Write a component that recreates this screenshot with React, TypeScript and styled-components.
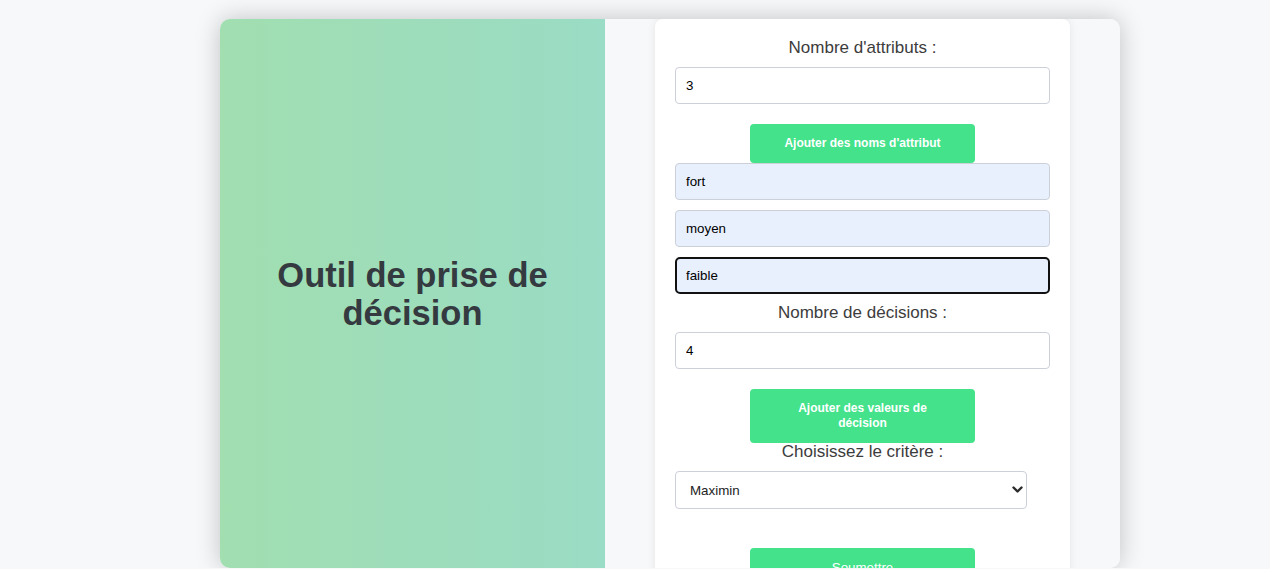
import React from "react";
import styled, { createGlobalStyle } from "styled-components";

const Global = createGlobalStyle`
  html, body { margin: 0; padding: 0; background: #f7f8fa; }
  body { font-family: "Liberation Sans", Arial, sans-serif; overflow: hidden; }
  * { box-sizing: border-box; }
`;

const Page = styled.div`
  padding: 19px 0 0 70px;
  display: flex;
  justify-content: center;
`;

const Container = styled.div`
  width: 900px;
  height: 549px;
  display: flex;
  border-radius: 10px;
  overflow: hidden;
  box-shadow: 0 0 24px rgba(0, 0, 0, 0.22);
`;

const Hero = styled.div`
  width: 385px;
  flex: none;
  display: flex;
  align-items: center;
  justify-content: center;
  padding: 0 30px;
  background: linear-gradient(to right, #a1deb0, #9adcc5);
`;

const Title = styled.h1`
  margin: 0;
  font-size: 34.5px;
  line-height: 38px;
  font-weight: 700;
  color: #343a40;
  text-align: center;
`;

const Side = styled.div`
  flex: 1;
  background: #f7f8fa;
  display: flex;
  justify-content: center;
  align-items: flex-start;
  overflow: hidden;
`;

const Card = styled.form`
  width: 415px;
  flex: none;
  background: #fff;
  border-radius: 8px;
  padding: 20px 20px 40px;
  box-shadow: 0 0 8px rgba(0, 0, 0, 0.08);
  display: flex;
  flex-direction: column;
`;

const Label = styled.label`
  display: block;
  text-align: center;
  font-size: 17px;
  line-height: 18px;
  color: #3c3c3c;
  margin-bottom: 10px;
`;

const Field = styled.input<{ $filled?: boolean; $focus?: boolean; $gap?: number }>`
  width: 100%;
  height: 37px;
  padding: 0 10px;
  font-family: "Liberation Sans", Arial, sans-serif;
  font-size: 13.33px;
  color: #000;
  background: ${(p) => (p.$filled ? "#e8f0fe" : "#fff")};
  border: ${(p) => (p.$focus ? "2px solid #111" : "1px solid #ccd0d8")};
  border-radius: ${(p) => (p.$focus ? "5px" : "4px")};
  padding-left: ${(p) => (p.$focus ? "9px" : "10px")};
  margin: 0 0 ${(p) => p.$gap ?? 10}px;
  outline: none;
`;

const Button = styled.button<{ $plain?: boolean }>`
  display: block;
  align-self: center;
  width: 225px;
  margin: 0;
  padding: 12px 30px;
  border: none;
  border-radius: 4px;
  background: #43e28b;
  color: #fff;
  font-family: "Liberation Sans", Arial, sans-serif;
  font-size: ${(p) => (p.$plain ? "13.33px" : "12px")};
  font-weight: ${(p) => (p.$plain ? 400 : 700)};
  line-height: 15px;
  text-align: center;
`;

const SelectWrap = styled.div`
  position: relative;
  width: 352px;
  margin: 0 0 39px;
`;

const Select = styled.select`
  display: block;
  width: 100%;
  height: 38px;
  padding: 0 24px 0 14px;
  appearance: none;
  -webkit-appearance: none;
  font-family: "Liberation Sans", Arial, sans-serif;
  font-size: 13.33px;
  color: #222;
  background: #fff;
  border: 1px solid #ccd0d8;
  border-radius: 4px;
  outline: none;
`;

const Chevron = styled.svg`
  position: absolute;
  right: 4px;
  top: 15px;
  width: 11px;
  height: 8px;
  pointer-events: none;
`;

export default function App() {
  return (
    <>
      <Global />
      <Page>
        <Container>
          <Hero>
            <Title>Outil de prise de décision</Title>
          </Hero>
          <Side>
            <Card onSubmit={(e) => e.preventDefault()}>
              <Label>Nombre d'attributs :</Label>
              <Field defaultValue="3" $gap={20} />
              <Button type="button">Ajouter des noms d'attribut</Button>
              <Field defaultValue="fort" $filled />
              <Field defaultValue="moyen" $filled />
              <Field defaultValue="faible" $filled $focus />
              <Label>Nombre de décisions :</Label>
              <Field defaultValue="4" $gap={20} />
              <Button type="button">Ajouter des valeurs de décision</Button>
              <Label>Choisissez le critère :</Label>
              <SelectWrap>
                <Select defaultValue="Maximin">
                  <option>Maximin</option>
                  <option>Maximax</option>
                  <option>Hurwicz</option>
                  <option>Laplace</option>
                  <option>Savage</option>
                </Select>
                <Chevron viewBox="0 0 11 8">
                  <path d="M1.5 1.5 L5.5 5.5 L9.5 1.5" fill="none" stroke="#2b2b2b" strokeWidth="2.4" strokeLinecap="round" strokeLinejoin="round" />
                </Chevron>
              </SelectWrap>
              <Button type="submit" $plain>Soumettre</Button>
            </Card>
          </Side>
        </Container>
      </Page>
    </>
  );
}
